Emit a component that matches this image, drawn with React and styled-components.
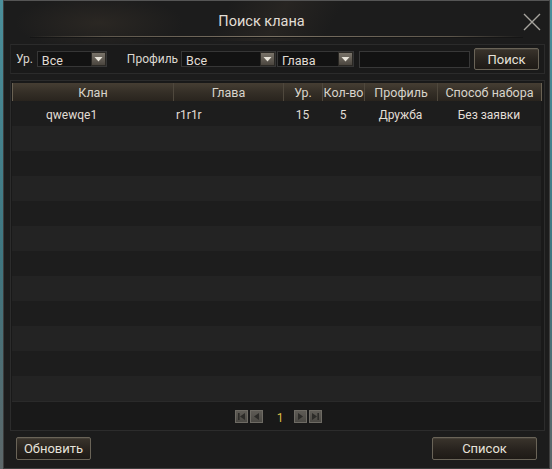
import React from "react";
import styled, { createGlobalStyle } from "styled-components";

const GlobalStyle = createGlobalStyle`
  html, body { margin: 0; padding: 0; }
  body {
    width: 552px;
    height: 469px;
    overflow: hidden;
    background: linear-gradient(180deg, #4b8f9b 0%, #3f7680 55%, #5d6769 100%);
    font-family: Roboto, "Noto Sans", sans-serif;
  }
  * { box-sizing: border-box; }
`;

const Window = styled.div`
  margin: 0 2px 0 3px;
  width: 547px;
  height: 469px;
  display: flex;
  flex-direction: column;
  padding: 0 4px 0 6px;
  background:
    radial-gradient(ellipse 120px 40px at 95px 22px, rgba(70, 60, 48, 0.35), transparent 70%),
    linear-gradient(120deg, transparent 40%, rgba(90, 75, 60, 0.18) 50%, transparent 60%) 0 0 / 100% 40px no-repeat,
    #1c1c1c;
  border: 1px solid #3d3d3d;
  border-top-color: #555;
`;

const TitleBar = styled.div`
  height: 35px;
  padding-top: 6px;
  display: grid;
  grid-template-columns: 1fr auto 1fr;
  align-items: center;
`;

const Title = styled.div`
  grid-column: 2;
  margin-right: 32px;
  font-size: 14.5px;
  color: #e2ded6;
`;

const Close = styled.button`
  justify-self: end;
  margin-right: 3px;
  width: 20px;
  height: 20px;
  padding: 0;
  border: 0;
  background: none;
  display: flex;
  align-items: center;
  justify-content: center;
`;

const Separator = styled.div`
  height: 1px;
  margin: 0 22px 0 20px;
  background: linear-gradient(90deg, transparent, #5e574c 15%, #7a7163 50%, #5e574c 85%, transparent);
  box-shadow: 0 1px 0 #151515;
`;

const FilterPanel = styled.div`
  margin-top: 7px;
  height: 30px;
  display: flex;
  align-items: center;
  padding-left: 5px;
  background: #1a1a1a;
  border: 1px solid #2b2b2b;
  border-left-color: #262626;
`;

const Label = styled.span`
  font-size: 12px;
  color: #dcd8d0;
  margin-left: ${p => p.$ml || 0}px;
  margin-right: ${p => p.$mr || 3}px;
`;

const Select = styled.div`
  width: ${p => p.$w}px;
  height: 16px;
  margin-left: ${p => p.$ml || 0}px;
  display: flex;
  align-items: center;
  background: #121212;
  border: 1px solid #363636;
  font-size: 12.5px;
  color: #e0dcd4;
  padding-left: 4px;
  padding-top: 2px;
  justify-content: space-between;
`;

const Arrow = styled.span`
  width: 15px;
  height: 14px;
  margin-top: -2px;
  display: flex;
  align-items: center;
  justify-content: center;
  background: linear-gradient(180deg, #7a746a, #4a453e);
  border: 1px solid #2a2824;
`;

const Input = styled.div`
  width: 111px;
  height: 17px;
  margin-left: 5px;
  background: #121212;
  border: 1px solid #383838;
`;

const Button = styled.button`
  width: ${p => p.$w}px;
  height: ${p => p.$h || 23}px;
  margin-left: ${p => p.$ml || 0}px;
  padding: 0;
  font-family: Roboto, "Noto Sans", sans-serif;
  font-size: 13px;
  color: #e6e2da;
  background: linear-gradient(180deg, #3a342c 0%, #28231e 55%, #1e1a16 100%);
  border: 1px solid #6a6458;
  border-radius: 2px;
  box-shadow: inset 0 1px 0 rgba(255, 255, 255, 0.06);
`;

const TablePanel = styled.div`
  margin-top: 6px;
  height: 351px;
  display: flex;
  flex-direction: column;
  padding: 2px 3px 0 1px;
  background: #191919;
  border: 1px solid #2c2c2c;
`;

const Cols = "161px 110px 39px 42px 73px 104px";

const HeaderRow = styled.div`
  display: grid;
  grid-template-columns: ${Cols};
  height: 18px;
  background: linear-gradient(180deg, #463e33 0%, #352f27 50%, #29241e 100%);
  border-left: 1px solid #6a6253;
`;

const HeadCell = styled.div`
  font-size: 12.5px;
  color: #d8d4cb;
  display: flex;
  align-items: center;
  justify-content: center;
  border-right: 1px solid ${p => (p.$last ? "#6a6253" : "#4f483d")};
`;

const Row = styled.div`
  display: grid;
  grid-template-columns: ${Cols};
  height: 25px;
  background: ${p => (p.$odd ? "#1d1d1d" : "#232323")};
`;

const Cell = styled.div`
  font-size: 12px;
  color: #e2ded6;
  display: flex;
  align-items: center;
  justify-content: ${p => (p.$left ? "flex-start" : "center")};
  padding-left: ${p => p.$pl || 0}px;
  padding-top: 2px;
`;

const Pager = styled.div`
  flex: 1;
  display: flex;
  align-items: center;
  justify-content: center;
  border-top: 1px solid #2a2a2a;
  padding-left: 4px;
`;

const NavBtn = styled.span`
  width: 13px;
  height: 13px;
  margin-left: ${p => p.$ml || 0}px;
  display: flex;
  align-items: center;
  justify-content: center;
  background: linear-gradient(180deg, #5e5b55, #4a4843);
  border: 1px solid #6e6b64;
`;

const Page = styled.span`
  margin: 0 11px 0 14px;
  font-size: 12px;
  color: #d9bd45;
  padding-top: 3px;
`;

const Footer = styled.div`
  flex: 1;
  display: flex;
  justify-content: space-between;
  padding: 6px 8px 0 6px;
`;

const DownTri = () => (
  <svg width="9" height="6" viewBox="0 0 9 6">
    <path d="M0.5 1h8L4.5 5.5z" fill="#e8e4da" />
  </svg>
);

const NavIcon = ({ kind }) => {
  const fill = "#2c2b28";
  return (
    <svg width="9" height="9" viewBox="0 0 9 9">
      {kind === "first" && (
        <>
          <rect x="1" y="1" width="1.6" height="7" fill={fill} />
          <path d="M8 1v7L3 4.5z" fill={fill} />
        </>
      )}
      {kind === "prev" && <path d="M7 1v7L2 4.5z" fill={fill} />}
      {kind === "next" && <path d="M2 1v7l5-3.5z" fill={fill} />}
      {kind === "last" && (
        <>
          <path d="M1 1v7l5-3.5z" fill={fill} />
          <rect x="6.4" y="1" width="1.6" height="7" fill={fill} />
        </>
      )}
    </svg>
  );
};

const rows = Array.from({ length: 12 }, (_, i) => i);
const headers = ["Клан", "Глава", "Ур.", "Кол-во", "Профиль", "Способ набора"];

export default function App() {
  return (
    <>
      <GlobalStyle />
      <Window>
        <TitleBar>
          <Title>Поиск клана</Title>
          <Close>
            <svg width="18" height="18" viewBox="0 0 18 18">
              <path d="M1 1L17 17M17 1L1 17" stroke="#a7a49e" strokeWidth="1.4" />
            </svg>
          </Close>
        </TitleBar>
        <Separator />
        <FilterPanel>
          <Label $mr={4}>Ур.</Label>
          <Select $w={70}>
            Все
            <Arrow><DownTri /></Arrow>
          </Select>
          <Label $ml={20}>Профиль</Label>
          <Select $w={95}>
            Все
            <Arrow><DownTri /></Arrow>
          </Select>
          <Select $w={77} $ml={1}>
            Глава
            <Arrow><DownTri /></Arrow>
          </Select>
          <Input />
          <Button $w={65} $h={22} $ml={4}>Поиск</Button>
        </FilterPanel>
        <TablePanel>
          <HeaderRow>
            {headers.map((h, i) => (
              <HeadCell key={h} $last={i === headers.length - 1}>{h}</HeadCell>
            ))}
          </HeaderRow>
          {rows.map(i => (
            <Row key={i} $odd={i % 2 === 0}>
              {i === 0 && (
                <>
                  <Cell $left $pl={34}>qwewqe1</Cell>
                  <Cell $left $pl={3}>r1r1r</Cell>
                  <Cell>15</Cell>
                  <Cell>5</Cell>
                  <Cell>Дружба</Cell>
                  <Cell>Без заявки</Cell>
                </>
              )}
            </Row>
          ))}
          <Pager>
            <NavBtn><NavIcon kind="first" /></NavBtn>
            <NavBtn $ml={2}><NavIcon kind="prev" /></NavBtn>
            <Page>1</Page>
            <NavBtn><NavIcon kind="next" /></NavBtn>
            <NavBtn $ml={2}><NavIcon kind="last" /></NavBtn>
          </Pager>
        </TablePanel>
        <Footer>
          <Button $w={75}>Обновить</Button>
          <Button $w={105}>Список</Button>
        </Footer>
      </Window>
    </>
  );
}
